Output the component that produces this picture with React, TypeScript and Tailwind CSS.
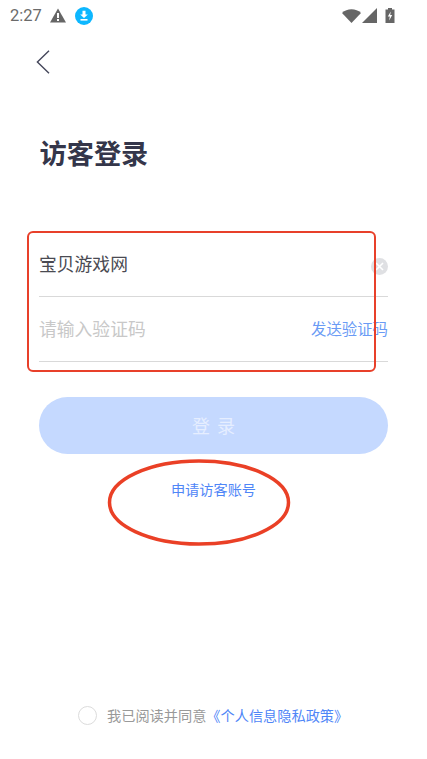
const cjk = { fontFamily: '"Noto Sans CJK SC", "Noto Sans", sans-serif' };

function StatusBar() {
  return (
    <div className="h-[31px] flex items-center justify-between pl-[10px] pr-[32px] text-[#6b6b6b]">
      <div className="flex items-center">
        <span className="text-[16.5px] leading-[31px] font-['Roboto',sans-serif]">2:27</span>
        <svg width="16" height="15" viewBox="0 0 16 15" className="ml-[8px]">
          <path d="M8 0.5 L16 14.5 H0 Z" fill="#666" />
          <rect x="7" y="5" width="2" height="5" fill="#fff" />
          <rect x="7" y="11" width="2" height="2" fill="#fff" />
        </svg>
        <svg width="18" height="18" viewBox="0 0 18 18" className="ml-[9px]">
          <circle cx="9" cy="9" r="9" fill="#0db7ff" />
          <path d="M7.5 3.8 H10.5 V7.5 H12.8 L9 11 L5.2 7.5 H7.5 Z" fill="#fff" />
          <rect x="5.5" y="12" width="7" height="1.6" fill="#fff" />
        </svg>
      </div>
      <div className="flex items-center">
        <svg width="19" height="15" viewBox="0 0 19 15">
          <path d="M0 5 C5 0 14 0 19 5 L9.5 15 Z" fill="#666" />
        </svg>
        <svg width="15" height="15" viewBox="0 0 15 15" className="ml-[1px]">
          <path d="M15 0 V15 H0 Z" fill="#666" />
        </svg>
        <svg width="10" height="15" viewBox="0 0 10 15" className="ml-[8px]">
          <path d="M3 0 H7 V1.5 H9.5 V15 H0.5 V1.5 H3 Z" fill="#666" />
          <path d="M5.8 3.5 L2.8 8.6 H4.8 L4.2 12.5 L7.2 7 H5.2 Z" fill="#fff" />
        </svg>
      </div>
    </div>
  );
}

export default function App() {
  return (
    <div className="relative w-[427px] h-[759px] bg-white overflow-hidden" style={cjk}>
      <StatusBar />

      <div className="pl-[36px] pt-[19px] h-[42px] box-content">
        <svg width="14" height="24" viewBox="0 0 14 24">
          <path d="M13 0.7 L1.4 12 L13 23.3" fill="none" stroke="#44465a" strokeWidth="1.4" />
        </svg>
      </div>

      <h1 className="ml-[39.5px] mt-[40px] text-[27.2px] leading-[40px] font-bold text-[#34364a]">访客登录</h1>

      <div className="ml-[39px] w-[349px] mt-[62px]">
        <div className="h-[63px] border-b border-[#d9d9d9] flex items-center justify-between">
          <span className="mb-[3px] text-[17.8px] text-[#4a4a52]">宝贝游戏网</span>
          <span className="w-[17px] h-[17px] rounded-full bg-[#dfe0e3] flex items-center justify-center mt-[3px]">
            <svg width="9" height="9" viewBox="0 0 9 9">
              <path d="M1 1 L8 8 M8 1 L1 8" stroke="#fff" strokeWidth="1.6" />
            </svg>
          </span>
        </div>
        <div className="h-[65px] border-b border-[#d9d9d9] flex items-center justify-between">
          <span className="mb-[1px] text-[17.8px] text-[#c8c8c8]">请输入验证码</span>
          <span className="text-[15.4px] text-[#6a9bf5]">发送验证码</span>
        </div>
      </div>

      <div className="ml-[39px] w-[349px] h-[57px] mt-[35px] rounded-[29px] bg-[#c5d9ff] flex items-center justify-center">
        <span className="pl-[7px] text-[18px] tracking-[7px] text-[#e6eeff]">登录</span>
      </div>

      <div className="mt-[25px] text-center text-[14.2px] leading-[20px] text-[#4f86f7]">申请访客账号</div>

      <div className="mt-[206px] ml-[78px] flex items-center">
        <span className="w-[19px] h-[19px] rounded-full border border-[#dcdcdc]" />
        <span className="ml-[10px] text-[14.2px] leading-[20px] text-[#999999]">我已阅读并同意</span>
        <span className="text-[14.2px] leading-[20px] text-[#4f86f7]">《个人信息隐私政策》</span>
      </div>

      <div className="absolute left-[27px] top-[231px] w-[349px] h-[141px] border-2 border-[#e8402a] rounded-[6px]" />
      <svg className="absolute left-[107px] top-[458px]" width="184" height="89" viewBox="0 0 184 89">
        <ellipse cx="92" cy="44.5" rx="89.5" ry="41.5" fill="none" stroke="#ea4026" strokeWidth="3.5" />
      </svg>
    </div>
  );
}
